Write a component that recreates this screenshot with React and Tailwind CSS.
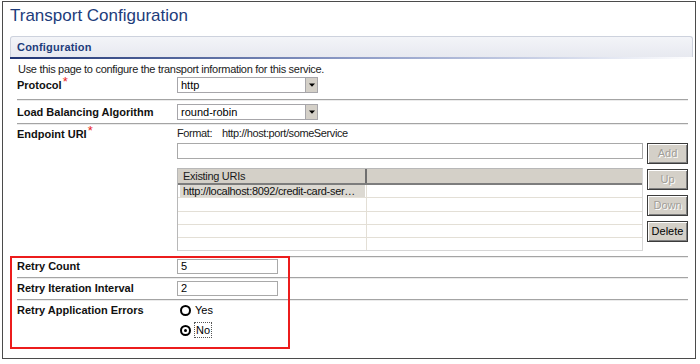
import React from "react";

function Divider() {
  return <div className="h-[2px] border-t border-[#a4a4a4] bg-[#ebebeb]" />;
}

function Select({ value }) {
  return (
    <div className="w-[141px] h-[16px] border border-[#a7a6aa] bg-white flex items-center">
      <span className="flex-1 pl-[3px] text-[11px] leading-[14px] text-black">{value}</span>
      <div className="w-[12px] h-[14px] bg-[#d4d0c8] border-l border-[#a7a6aa] flex items-center justify-center">
        <svg width="6" height="4" viewBox="0 0 6 4">
          <path d="M0 0.5h6L3 3.8z" fill="#000" />
        </svg>
      </div>
    </div>
  );
}

function Btn({ children, disabled }) {
  return (
    <div className="w-[41px] h-[21px] border border-[#3c3c3c] bg-[#d4d0c8] flex items-center justify-center shadow-[inset_1px_1px_0_#ffffff,inset_-1px_-1px_0_#808080]">
      <span
        className={
          "text-[11px] leading-none " +
          (disabled ? "text-[#a19e98] [text-shadow:1px_1px_0_#ffffff]" : "text-black")
        }
      >
        {children}
      </span>
    </div>
  );
}

function TextBox({ w, value }) {
  return (
    <div
      className="h-[15px] border border-[#a9a9a9] bg-white flex items-center pl-[3px] text-[11px] leading-none text-black"
      style={{ width: w }}
    >
      {value}
    </div>
  );
}

function Radio({ checked }) {
  return (
    <span className="w-[11px] h-[11px] rounded-full border-2 border-black bg-white flex items-center justify-center">
      {checked && <span className="w-[3px] h-[3px] rounded-full bg-black" />}
    </span>
  );
}

function Label({ children, req }) {
  return (
    <div className="w-[160px] shrink-0 text-[11px] leading-[15px] font-bold text-[#111]">
      {children}
      {req && <span className="text-[#e8231b] text-[13px] relative top-[-3px] ml-[1px] font-normal">*</span>}
    </div>
  );
}

export default function App() {
  const rows = [0, 1, 2, 3, 4];
  return (
    <div className="w-[700px] h-[364px] bg-white pt-[1px] [font-family:'Liberation_Sans',Arial,sans-serif]">
      <div className="ml-[2px] w-[694px] h-[358px] border border-[#4b4b4b]">
        <div className="h-[34px] pl-[7px] pt-[3px] text-[17px] leading-[22px] text-[#1d3c7b]">
          Transport Configuration
        </div>

        <div className="ml-[7px] w-[683px]">
          <div className="h-[21px] border-t border-l border-r border-[#cdd2dd] rounded-tl-[3px] rounded-tr-[3px] bg-gradient-to-b from-[#f3f4f8] to-[#e7e9f0] flex items-center pl-[6px]">
            <span className="text-[11px] font-bold text-[#1d3c7b] tracking-[0.2px]">Configuration</span>
          </div>
          <div className="h-[2px] bg-gradient-to-r from-[#1f3372] via-[#8d9bc6] to-[#ffffff]" />
        </div>

        <div className="ml-[14px] w-[671px]">
          <div className="mt-[3px] h-[15px] pl-[1px] text-[11px] leading-[15px] text-[#1a1a1a] tracking-[-0.3px]">
            Use this page to configure the transport information for this service.
          </div>

          {/* Protocol */}
          <div className="flex items-center pb-[6px]">
            <Label req>Protocol</Label>
            <Select value="http" />
          </div>
          <Divider />

          {/* Load balancing */}
          <div className="flex items-center pt-[3px] pb-[3px]">
            <Label>Load Balancing Algorithm</Label>
            <Select value="round-robin" />
          </div>
          <Divider />

          {/* Endpoint URI */}
          <div className="flex pt-[1px] pb-[5px]">
            <Label req>Endpoint URI</Label>
            <div className="flex-1">
              <div className="h-[15px] text-[11px] leading-[15px] text-[#1a1a1a] tracking-[-0.4px] flex whitespace-nowrap">
                <span className="w-[45px] shrink-0">Format:</span>
                <span>http://host:port/someService</span>
              </div>
              <div className="flex gap-[4px] mt-[2px]">
                <div className="w-[466px] h-[16px] border border-[#a9a9a9] bg-white" />
                <Btn disabled>Add</Btn>
              </div>
              <div className="flex gap-[4px] mt-[4px]">
                <div className="w-[466px] h-[83px] border-t border-l border-[#b8b8b8] border-r border-b border-r-[#d6d6d6] border-b-[#d6d6d6] bg-white overflow-hidden">
                  <div className="flex h-[16px] bg-[#d4d0c8] border-b-2 border-[#7d7d7d]">
                    <div className="w-[189px] h-full border-r-2 border-r-[#6f6f6f] pl-[5px] text-[11px] leading-[14px] text-[#1a1a1a] tracking-[-0.3px]">
                      Existing URIs
                    </div>
                    <div className="flex-1" />
                  </div>
                  {rows.map((i) => (
                    <div key={i} className="flex h-[13.3px] border-b border-[#e3dfd6]">
                      <div className="w-[189px] h-full border-r border-[#e3dfd6] pl-[2px] pr-[1px]">
                        {i === 0 && (
                          <div className="h-full bg-[#dcd9d2] pl-[3px] text-[11px] leading-[12px] text-[#111] tracking-[-0.3px] whitespace-nowrap overflow-hidden">
                            http://localhost:8092/credit-card-ser…
                          </div>
                        )}
                      </div>
                      <div className="flex-1" />
                    </div>
                  ))}
                </div>
                <div className="flex flex-col gap-[5px] pt-[1px]">
                  <Btn disabled>Up</Btn>
                  <Btn disabled>Down</Btn>
                  <Btn>Delete</Btn>
                </div>
              </div>
            </div>
          </div>

          <div className="relative">
            <Divider />
            {/* Retry Count */}
            <div className="flex items-center pt-[1px] pb-[3px]">
              <Label>Retry Count</Label>
              <TextBox w={101} value="5" />
            </div>
            <Divider />
            {/* Retry Iteration Interval */}
            <div className="flex items-center pt-[2px] pb-[3px]">
              <Label>Retry Iteration Interval</Label>
              <TextBox w={101} value="2" />
            </div>
            <Divider />
            {/* Retry Application Errors */}
            <div className="flex pt-[2px]">
              <Label>Retry Application Errors</Label>
              <div className="flex flex-col gap-[4px] pl-[3px]">
                <div className="flex items-center h-[15px] gap-[4px]">
                  <Radio />
                  <span className="text-[11px] leading-none text-black">Yes</span>
                </div>
                <div className="flex items-center h-[16px] gap-[3px]">
                  <Radio checked />
                  <span className="h-[16px] px-[1px] border border-dotted border-[#555] flex items-center text-[11px] leading-none text-black">
                    No
                  </span>
                </div>
              </div>
            </div>

            <div className="absolute left-[-7px] top-0 w-[280px] h-[93px] border-2 border-[#ec1c1c] pointer-events-none" />
          </div>
        </div>
      </div>
    </div>
  );
}
